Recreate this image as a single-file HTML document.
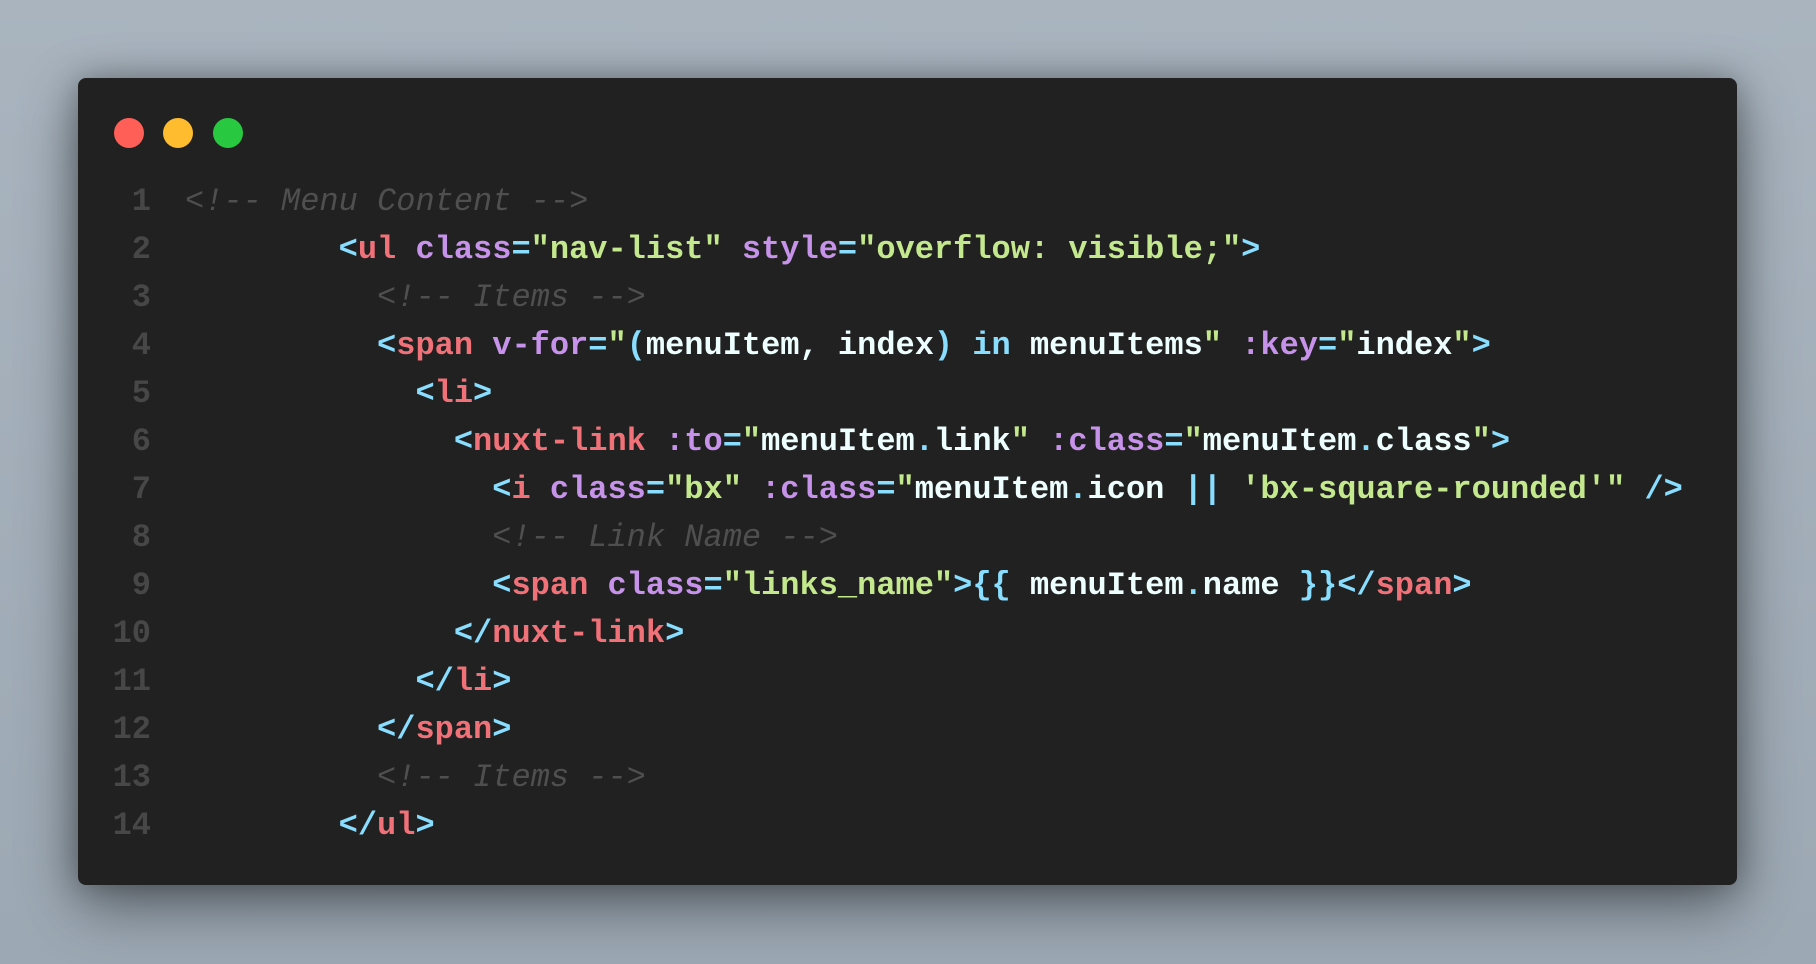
<!DOCTYPE html>
<html><head><meta charset="utf-8"><style>
html,body{margin:0;padding:0;}
body{width:1816px;height:964px;overflow:hidden;background:linear-gradient(180deg,#a9b4bf 0%,#9ca8b3 100%);position:relative;font-family:"Liberation Mono",monospace;}
.win{position:absolute;left:78px;top:78px;width:1659px;height:807px;background:#212121;border-radius:8px;box-shadow:0 20px 60px rgba(0,0,0,0.45),0 0 30px rgba(0,0,0,0.25);}
.dot{position:absolute;top:118px;width:30px;height:30px;border-radius:50%;}
.ln{position:absolute;left:100px;width:51px;top:178px;text-align:right;color:#474747;font-weight:bold;font-size:32px;line-height:48px;white-space:pre;}
.code{position:absolute;left:185px;top:178px;font-size:32px;line-height:48px;white-space:pre;font-weight:bold;color:#eeffff;}
.c{color:#4f4f4f;font-style:italic;font-weight:normal;}
.p{color:#89ddff}.t{color:#f07178}.a{color:#c792ea}.s{color:#c3e88d}
</style></head><body>
<div class="win"></div>
<div class="dot" style="left:114px;background:#ff5f57"></div>
<div class="dot" style="left:163px;background:#febc2e"></div>
<div class="dot" style="left:213px;background:#28c840"></div>
<div class="ln">1
2
3
4
5
6
7
8
9
10
11
12
13
14</div>
<div class="code"><span class="c">&lt;!-- Menu Content --&gt;</span>
        <span class="p">&lt;</span><span class="t">ul</span> <span class="a">class</span><span class="p">=</span><span class="s">"nav-list"</span> <span class="a">style</span><span class="p">=</span><span class="s">"overflow: visible;"</span><span class="p">&gt;</span>
          <span class="c">&lt;!-- Items --&gt;</span>
          <span class="p">&lt;</span><span class="t">span</span> <span class="a">v-for</span><span class="p">=</span><span class="s">"</span><span class="p">(</span>menuItem, index<span class="p">)</span> <span class="p">in</span> menuItems<span class="s">"</span> <span class="a">:key</span><span class="p">=</span><span class="s">"</span>index<span class="s">"</span><span class="p">&gt;</span>
            <span class="p">&lt;</span><span class="t">li</span><span class="p">&gt;</span>
              <span class="p">&lt;</span><span class="t">nuxt-link</span> <span class="a">:to</span><span class="p">=</span><span class="s">"</span>menuItem<span class="p">.</span>link<span class="s">"</span> <span class="a">:class</span><span class="p">=</span><span class="s">"</span>menuItem<span class="p">.</span>class<span class="s">"</span><span class="p">&gt;</span>
                <span class="p">&lt;</span><span class="t">i</span> <span class="a">class</span><span class="p">=</span><span class="s">"bx"</span> <span class="a">:class</span><span class="p">=</span><span class="s">"</span>menuItem<span class="p">.</span>icon <span class="p">||</span> <span class="s">'bx-square-rounded'"</span> <span class="p">/&gt;</span>
                <span class="c">&lt;!-- Link Name --&gt;</span>
                <span class="p">&lt;</span><span class="t">span</span> <span class="a">class</span><span class="p">=</span><span class="s">"links_name"</span><span class="p">&gt;{{</span> menuItem<span class="p">.</span>name <span class="p">}}&lt;/</span><span class="t">span</span><span class="p">&gt;</span>
              <span class="p">&lt;/</span><span class="t">nuxt-link</span><span class="p">&gt;</span>
            <span class="p">&lt;/</span><span class="t">li</span><span class="p">&gt;</span>
          <span class="p">&lt;/</span><span class="t">span</span><span class="p">&gt;</span>
          <span class="c">&lt;!-- Items --&gt;</span>
        <span class="p">&lt;/</span><span class="t">ul</span><span class="p">&gt;</span></div>
</body></html>
